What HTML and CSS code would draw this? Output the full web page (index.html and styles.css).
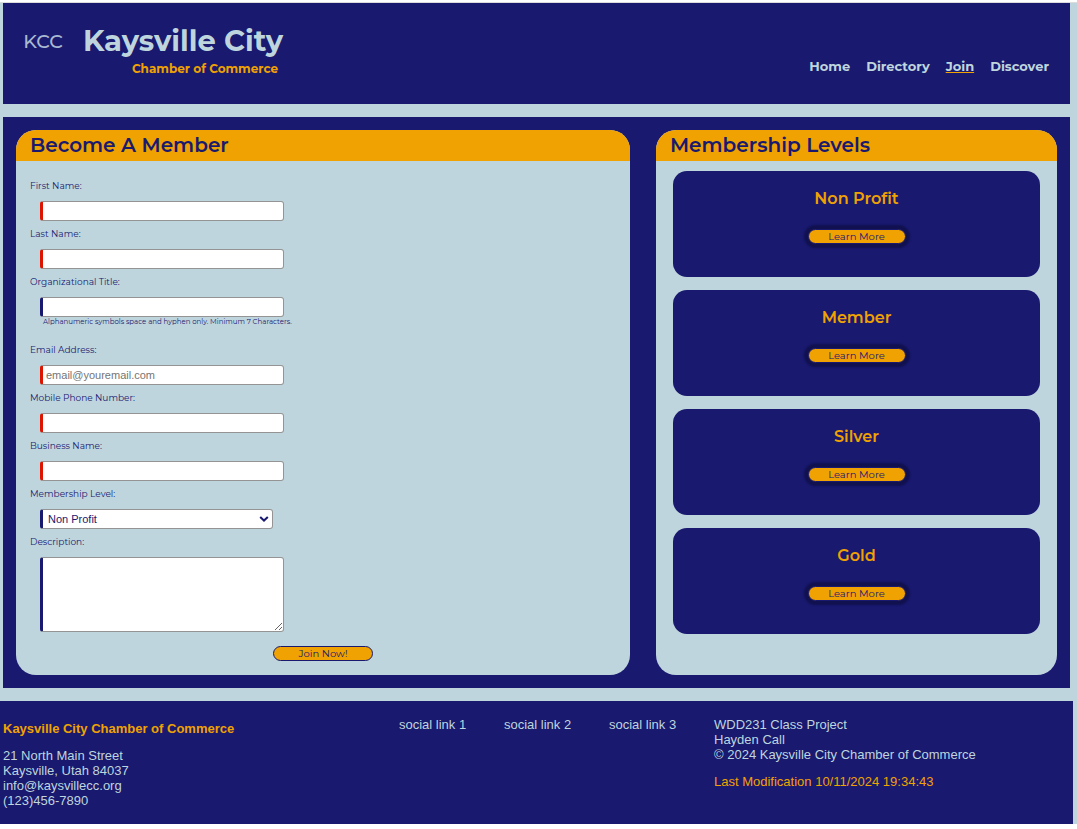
FILE: index.html
```html
<!DOCTYPE html>
<html lang="en">
<head>
<meta charset="utf-8">
<meta name="viewport" content="width=device-width, initial-scale=1">
<title>Kaysville City Chamber of Commerce - Join</title>
<link rel="stylesheet" href="styles.css">
</head>
<body>
<div class="page">
  <header class="site-header">
    <div class="brand">
      <svg class="logo" viewBox="0 0 40 24" role="img" aria-label="KCC"><text x="20" y="19" text-anchor="middle">KCC</text></svg>
      <div class="brand-text">
        <h1>Kaysville City</h1>
        <p>Chamber of Commerce</p>
      </div>
    </div>
    <nav class="site-nav" aria-label="Main">
      <a href="#home">Home</a>
      <a href="#directory">Directory</a>
      <a href="#join" class="active" aria-current="page">Join</a>
      <a href="#discover">Discover</a>
    </nav>
  </header>

  <main class="content">
    <section class="panel">
      <h2>Become A Member</h2>
      <form class="join-form">
        <div class="field">
          <label for="first">First Name:</label>
          <input id="first" type="text" required>
        </div>
        <div class="field">
          <label for="last">Last Name:</label>
          <input id="last" type="text" required>
        </div>
        <div class="field field-hinted">
          <label for="title">Organizational Title:</label>
          <input id="title" type="text" minlength="7" aria-describedby="title-hint">
          <small id="title-hint">Alphanumeric symbols space and hyphen only. Minimum 7 Characters.</small>
        </div>
        <div class="field">
          <label for="email">Email Address:</label>
          <input id="email" type="email" placeholder="email@youremail.com" required>
        </div>
        <div class="field">
          <label for="phone">Mobile Phone Number:</label>
          <input id="phone" type="tel" required>
        </div>
        <div class="field">
          <label for="business">Business Name:</label>
          <input id="business" type="text" required>
        </div>
        <div class="field">
          <label for="level">Membership Level:</label>
          <div class="select-wrap">
            <select id="level">
              <option>Non Profit</option>
              <option>Member</option>
              <option>Silver</option>
              <option>Gold</option>
            </select>
            <svg class="chevron" viewBox="0 0 10 8" aria-hidden="true"><path d="M1.2 2l3.8 3.6L8.800 2"/></svg>
          </div>
        </div>
        <div class="field field-last">
          <label for="description">Description:</label>
          <textarea id="description"></textarea>
        </div>
        <button class="pill" type="submit">Join Now!</button>
      </form>
    </section>

    <section class="panel">
      <h2>Membership Levels</h2>
      <div class="levels">
        <article class="level"><h3>Non Profit</h3><button class="pill raised" type="button">Learn More</button></article>
        <article class="level"><h3>Member</h3><button class="pill raised" type="button">Learn More</button></article>
        <article class="level"><h3>Silver</h3><button class="pill raised" type="button">Learn More</button></article>
        <article class="level"><h3>Gold</h3><button class="pill raised" type="button">Learn More</button></article>
      </div>
    </section>
  </main>

  <footer class="site-footer">
    <div class="contact">
      <h4>Kaysville City Chamber of Commerce</h4>
      <p>21 North Main Street<br>Kaysville, Utah 84037<br>info@kaysvillecc.org<br>(123)456-7890</p>
    </div>
    <div class="social">
      <a href="#social1">social link 1</a>
      <a href="#social2">social link 2</a>
      <a href="#social3">social link 3</a>
    </div>
    <div class="credits">
      <p>WDD231 Class Project<br>Hayden Call<br>© 2024 Kaysville City Chamber of Commerce</p>
      <p class="modified">Last Modification 10/11/2024 19:34:43</p>
    </div>
  </footer>
</div>
</body>
</html>
```

FILE: styles.css
```css
:root {
  --navy: #191970;
  --orange: #f0a202;
  --sky: #bfd5dd;
  --red: #dd1400;
  --display: Montserrat, Inter, sans-serif;
  --text: "Liberation Sans", Arial, sans-serif;
}

* { box-sizing: border-box; }

body {
  margin: 0;
  padding-top: 2px;
  background: #fff;
  color: var(--navy);
  font-family: var(--display);
}

h1, h2, h3, h4, p { margin: 0; }
a { color: inherit; text-decoration: none; }

.page {
  border-top: 1px solid #dcdcdc;
  padding-right: 4px;
  background: var(--sky);
}

.site-header {
  display: flex;
  justify-content: space-between;
  margin: 0 3px 13px;
  padding: 20px 21px 25px 20px;
  background: var(--navy);
  color: var(--sky);
}

.brand { display: flex; gap: 20px; }

.logo {
  width: 40px;
  height: 24px;
  margin-top: 6px;
}

.logo text {
  fill: #a9b9d0;
  font-family: var(--display);
  font-size: 19px;
  font-weight: 500;
}

.brand-text { text-align: right; }

.brand h1 {
  font-size: 29px;
  line-height: 36px;
  font-weight: 700;
}

.brand p {
  padding-right: 5px;
  color: var(--orange);
  font-size: 12px;
  line-height: 20px;
  font-weight: 700;
}

.site-nav {
  display: flex;
  gap: 16px;
  padding-top: 35px;
  font-size: 13px;
  line-height: 17px;
  font-weight: 700;
}

.site-nav .active { text-decoration: underline var(--orange); }

.content {
  display: grid;
  grid-template-columns: 614fr 401fr;
  gap: 26px;
  margin: 0 3px 13px;
  padding: 13px;
  background: var(--navy);
}

.panel {
  overflow: hidden;
  border-radius: 20px;
  background: var(--sky);
}

.panel h2 {
  padding: 0 14px;
  background: var(--orange);
  font-size: 20px;
  line-height: 31px;
  font-weight: 600;
}

.join-form {
  display: flex;
  flex-direction: column;
  padding: 19px 14px 14px;
}

.field {
  display: flex;
  flex-direction: column;
  align-items: flex-start;
  margin-bottom: 7px;
}

.field label {
  margin-bottom: 9px;
  font-size: 9px;
  line-height: 12px;
}

.field input, .field select, .field textarea {
  width: 244px;
  height: 20px;
  margin: 0 0 0 10px;
  padding: 0 3px;
  border: 1px solid #949494;
  border-left: 3px solid var(--navy);
  border-radius: 3px;
  background: #fff;
  color: var(--navy);
  font-family: var(--text);
  font-size: 11px;
}

.field input:required { border-left-color: var(--red); }
.field input::placeholder { color: #757575; }
.field textarea { height: 75px; resize: both; }

.field-hinted { margin-bottom: 17px; }
.field-last { margin-bottom: 14px; }

.field small {
  margin-left: 13px;
  font-size: 7px;
  line-height: 10px;
}

.select-wrap {
  display: grid;
  align-items: center;
}

.select-wrap select {
  grid-area: 1 / 1;
  width: 233px;
  padding-left: 5px;
  appearance: none;
}

.chevron {
  grid-area: 1 / 1;
  justify-self: end;
  width: 10px;
  height: 8px;
  margin-right: 4px;
  fill: none;
  stroke: var(--navy);
  stroke-width: 2;
  pointer-events: none;
}

.pill {
  align-self: center;
  width: 100px;
  height: 15px;
  padding: 0;
  border: 1px solid var(--navy);
  border-radius: 8px;
  background: var(--orange);
  color: var(--navy);
  font-family: var(--display);
  font-size: 10px;
  line-height: 13px;
}

.raised {
  width: 98px;
  box-shadow: 0 0 2px 4px #111150;
}

.levels {
  display: grid;
  gap: 13px;
  padding: 10px 17px;
}

.level {
  display: flex;
  flex-direction: column;
  gap: 20px;
  padding: 18px 0 33px;
  border-radius: 14px;
  background: var(--navy);
  text-align: center;
}

.level h3 {
  color: var(--orange);
  font-size: 16px;
  line-height: 20px;
  font-weight: 600;
}

.site-footer {
  display: grid;
  grid-template-columns: 396fr 315fr 359fr;
  padding: 16px 0 16px 3px;
  background: var(--navy);
  color: var(--sky);
  font-family: var(--text);
  font-size: 13px;
  line-height: 15px;
}

.contact { padding-top: 4px; }

.contact h4 {
  margin-bottom: 12px;
  color: var(--orange);
  font-size: 13px;
}

.social {
  display: grid;
  grid-template-columns: repeat(3, 1fr);
  align-items: start;
}

.modified {
  margin-top: 12px;
  color: var(--orange);
}
```
